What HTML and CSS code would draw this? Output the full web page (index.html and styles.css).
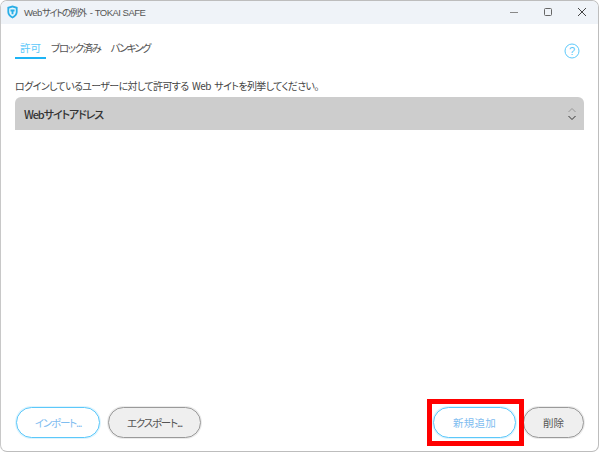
FILE: index.html
```html
<!DOCTYPE html>
<html lang="ja">
<head>
    <meta charset="utf-8">
    <title>Webサイトの例外 - TOKAI SAFE</title>
    <link rel="stylesheet" href="styles.css">
</head>
<body>
    <div class="window">
        <div class="titlebar">
            <svg class="appicon" width="11" height="14" viewBox="0 0 14 16" preserveAspectRatio="none">
                <path d="M7 .5 13.500 2.400V8c0 3.400-2.700 5.900-6.500 7.500C3.200 13.900.5 11.400.5 8V2.400Z" fill="#29aee6"/>
                <path d="M7 2.800 11.200 4V8c0 2.200-1.700 3.900-4.200 5.100C4.500 11.900 2.800 10.200 2.800 8V4Z" fill="#e6f6fd"/>
                <path d="M4.400 5h5.200v2.400H8.200v3.300H5.800V7.400H4.400Z" fill="#29aee6"/>
            </svg>
            <span class="titletext">Web<span class="kana">サイトの例外</span> - TOKAI SAFE</span>
            <div class="winbtns">
                <svg width="10" height="10" viewBox="0 0 10 10"><path d="M1 5.500h8" stroke="#888" fill="none"/></svg>
                <svg width="10" height="10" viewBox="0 0 10 10"><rect x="1.500" y="1.500" width="7" height="7" rx="1" stroke="#666" fill="none"/></svg>
                <svg width="10" height="10" viewBox="0 0 10 10"><path d="M1 1l8 8M9 1l-8 8" stroke="#444" fill="none"/></svg>
            </div>
        </div>
        <div class="content">
            <div class="tabrow">
                <div class="tabs">
                    <span class="tab active">許可</span>
                    <span class="tab">ブロック済み</span>
                    <span class="tab last">バンキング</span>
                </div>
                <svg class="help" width="16" height="16" viewBox="0 0 16 16">
                    <circle cx="8" cy="8" r="7" stroke="#5cc8fa" fill="none"/>
                    <text x="8" y="11.500" text-anchor="middle" class="helpmark">?</text>
                </svg>
            </div>
            <p class="desc">ログインしているユーザーに対して許可する Web サイトを列挙してください。</p>
            <div class="listhead">
                <span>Webサイトアドレス</span>
                <svg width="10" height="14" viewBox="0 0 10 14">
                    <path d="M1.500 5 5 1.500 8.500 5" stroke="#999" fill="none"/>
                    <path d="M1.500 9 5 12.500 8.500 9" stroke="#333" fill="none"/>
                </svg>
            </div>
            <div class="listbody"></div>
            <div class="footer">
                <button class="btn blue wide">インポート...</button>
                <button class="btn gray widest">エクスポート...</button>
                <div class="spacer"></div>
                <button class="btn blue add">新規追加</button>
                <button class="btn gray small">削除</button>
            </div>
        </div>
        <div class="redbox"></div>
    </div>
</body>
</html>
```

FILE: styles.css
```css
* {
    margin: 0;
    box-sizing: border-box;
}

body {
    width: 600px;
    height: 453px;
    background: #fff;
    overflow: hidden;
    font-family: "Noto Sans CJK JP", "Liberation Sans", sans-serif;
    font-feature-settings: "palt";
    color: #444;
}

.window {
    position: relative;
    width: 599px;
    height: 452px;
    border: 1px solid #bdbdbd;
    border-left-color: #c8c8c8;
    border-radius: 7px;
    background: #fff;
    display: flex;
    flex-direction: column;
    overflow: hidden;
}

.titlebar {
    height: 23px;
    flex: none;
    background: #eff3f8;
    display: flex;
    align-items: center;
    padding: 0 0 2px 6px;
}

.appicon {
    flex: none;
}

.titletext {
    margin-left: 6px;
    font-family: "Liberation Sans", "Noto Sans CJK JP", sans-serif;
    font-size: 9.500px;
    letter-spacing: -0.5px;
    color: #555;
}

.kana {
    letter-spacing: -1.5px;
    margin-right: 2px;
}

.winbtns {
    margin-left: auto;
    display: flex;
    gap: 24px;
    padding-right: 11px;
    align-items: center;
}

.content {
    flex: 1;
    display: flex;
    flex-direction: column;
    padding: 0 14px 6px;
}

.tabrow {
    display: flex;
    align-items: flex-start;
    justify-content: space-between;
    height: 53px;
    padding-top: 14px;
}

.tabs {
    display: flex;
    gap: 5px;
}

.tab {
    font-size: 10.500px;
    line-height: 19px;
    height: 21px;
    color: #555;
    letter-spacing: -1.4px;
}

.tab.active {
    color: #5cc8fa;
    border-bottom: 2px solid #1eb4f5;
    padding: 0 5px;
    letter-spacing: 0;
}

.tab.last {
    margin-left: 5px;
    letter-spacing: -1.8px;
}

.help {
    margin: 5px 4px 0 0;
}

.helpmark {
    font-family: "Liberation Sans", sans-serif;
    font-size: 11px;
    fill: #5cc8fa;
}

.desc {
    font-size: 10px;
    line-height: 18px;
    height: 20px;
    color: #444;
    letter-spacing: -0.63px;
    word-spacing: 2px;
}

.listhead {
    height: 33px;
    flex: none;
    background: #cdcdcd;
    border-radius: 6px 6px 0 0;
    display: flex;
    align-items: center;
    justify-content: space-between;
    padding: 0 7px 0 9px;
    font-size: 11px;
    font-weight: 500;
    letter-spacing: -1.1px;
    color: #333;
}

.listbody {
    flex: 1;
}

.footer {
    display: flex;
    align-items: center;
    height: 31px;
    margin-bottom: 7px;
    padding-left: 1px;
}

.btn {
    height: 31px;
    border-radius: 16px;
    font-family: inherit;
    font-feature-settings: inherit;
    font-size: 10.500px;
    letter-spacing: -1.2px;
    padding: 0;
}

.btn.blue {
    background: #fff;
    border: 1px solid #5cc8fa;
    box-shadow: 0 0 0 1px rgba(92, 200, 250, 0.2);
    color: #7fbdf0;
}

.btn.gray {
    background: #efefef;
    border: 1px solid #9a9a9a;
    box-shadow: 0 0 0 1px rgba(154, 154, 154, 0.2);
    color: #555;
}

.wide {
    width: 84px;
}

.widest {
    width: 93px;
    margin-left: 8px;
}

.spacer {
    flex: 1;
}

.btn.add {
    width: 83px;
    letter-spacing: 0.3px;
}

.btn.small {
    width: 61px;
    margin-left: 7px;
    letter-spacing: 0;
}

/* annotation over the add button */
.redbox {
    position: absolute;
    left: 426px;
    top: 398px;
    width: 97px;
    height: 47px;
    border: 5px solid #f00;
}
```
